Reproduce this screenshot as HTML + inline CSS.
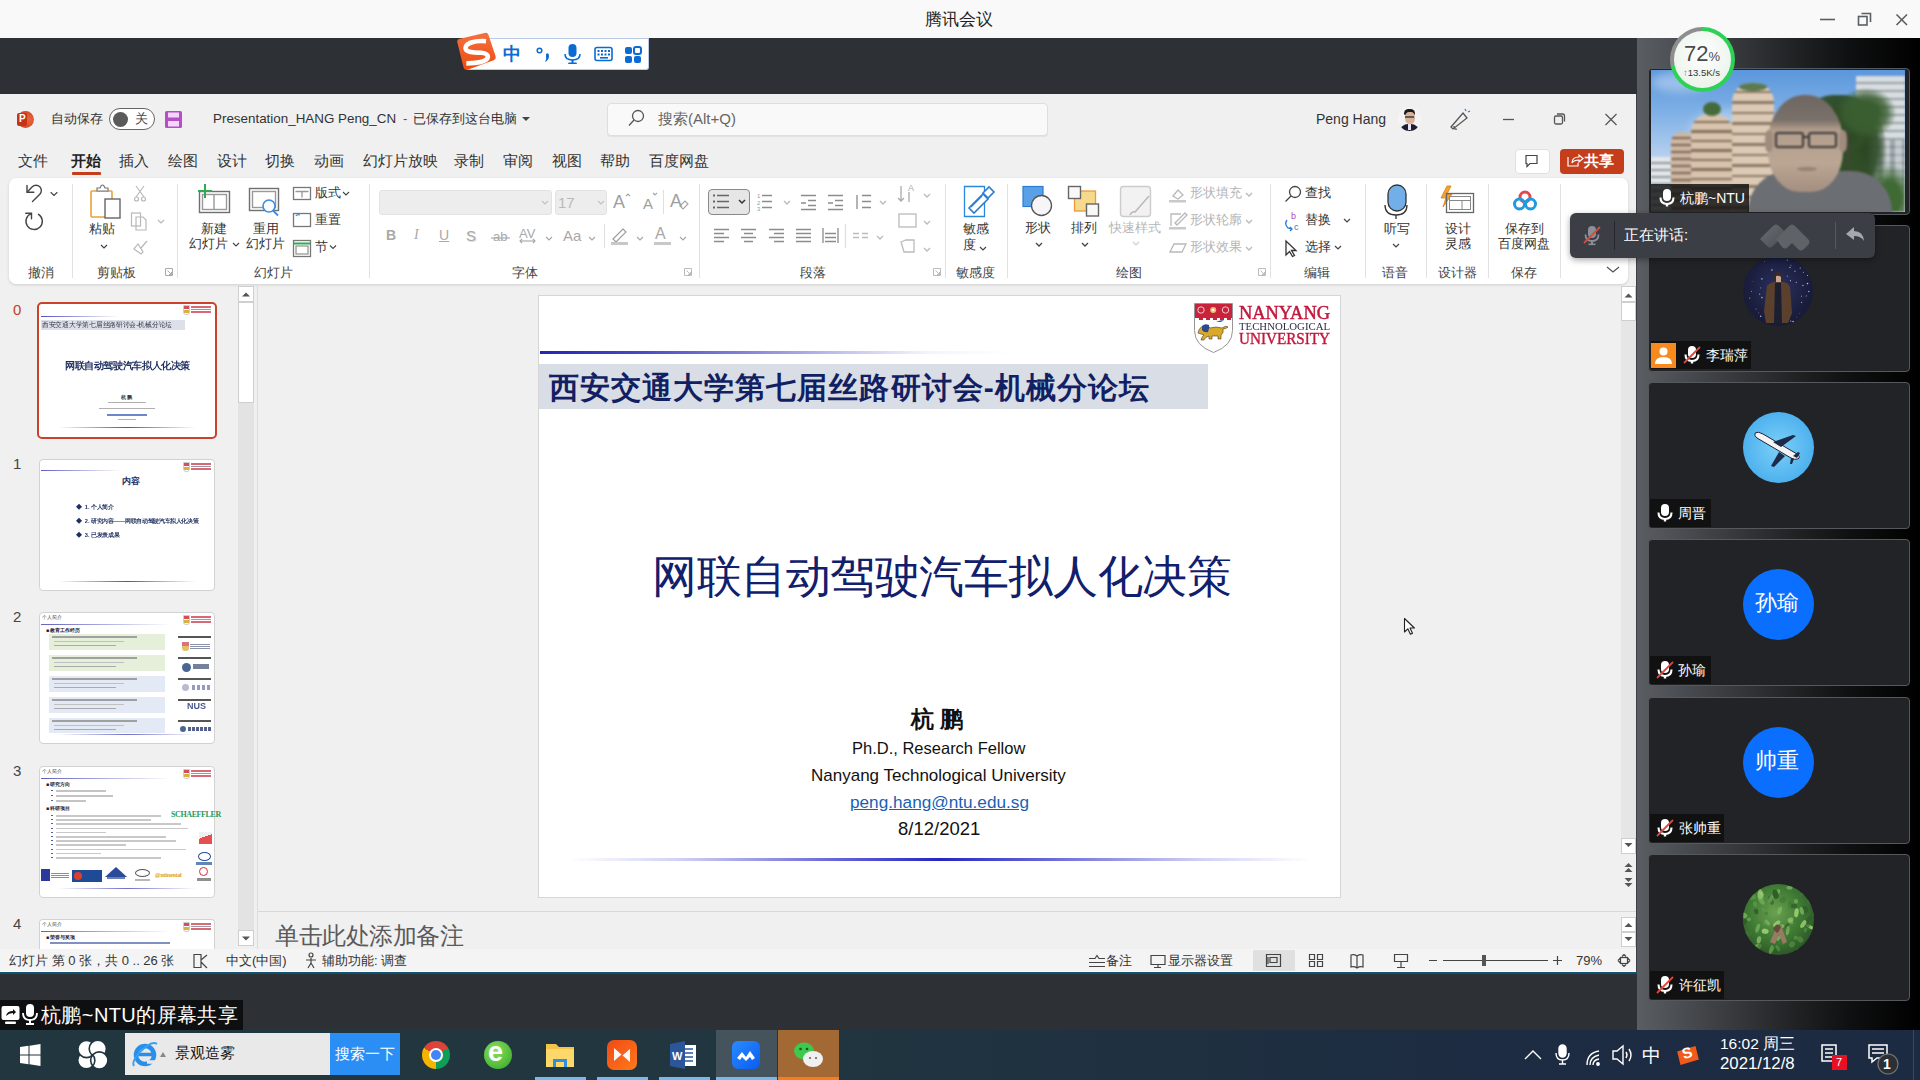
<!DOCTYPE html>
<html><head><meta charset="utf-8">
<style>
*{margin:0;padding:0;box-sizing:border-box}
html,body{width:1920px;height:1080px;overflow:hidden;background:#2c2f33;font-family:"Liberation Sans",sans-serif;color:#222;position:relative}
.a{position:absolute}
.t{position:absolute;white-space:nowrap;line-height:1}
svg{position:absolute;overflow:visible}
#titlebar{left:0;top:0;width:1920px;height:38px;background:#f9f9f9}
#darkband{left:0;top:38px;width:1637px;height:56px;background:#2d3034}
#rpanel{left:1637px;top:38px;width:283px;height:992px;background:linear-gradient(90deg,#5a5e63 0%,#45484c 20%,#343538 38%,#222325 55%,#0f1011 75%,#000 100%)}
#ppt{left:0;top:94px;width:1637px;height:879px;background:#f0f0f0}
#bottomband{left:0;top:973px;width:1637px;height:57px;background:#2d3034}
#taskbar{left:0;top:1030px;width:1920px;height:50px;background:linear-gradient(90deg,#22363f 0%,#213640 40%,#1d2c41 75%,#1c2b42 100%)}
.menu{font-size:15px;color:#333;top:153px}
.rb{font-size:13px;color:#333}
.gl{font-size:13px;color:#444;top:266px}
.sep{position:absolute;width:1px;background:#e1e1e1;top:184px;height:94px}
.dis{color:#b5b5b5}
</style></head><body>
<div id="titlebar" class="a"></div>
<div class="t" style="left:925px;top:11px;font-size:17px;color:#1e1e1e">腾讯会议</div>
<svg style="left:0;top:0" width="1920" height="38">
<g stroke="#5b5e63" stroke-width="1.6" fill="none">
<line x1="1820" y1="19.5" x2="1835" y2="19.5"/>
<rect x="1858.5" y="16.5" width="8.5" height="8.5"/>
<polyline points="1861.5,13.5 1870.5,13.5 1870.5,22"/>
<line x1="1896.5" y1="14.5" x2="1907" y2="25"/><line x1="1907" y1="14.5" x2="1896.5" y2="25"/>
</g></svg>

<div id="darkband" class="a"></div>
<!-- IME toolbar -->
<div class="a" style="left:466px;top:38px;width:183px;height:32px;background:#fff;border:1px solid #b9cbe6;border-left:none;border-radius:0 0 3px 0"></div>
<svg style="left:0;top:0" width="520" height="80"><defs><linearGradient id="sg" x1="0" y1="0" x2="0" y2="1"><stop offset="0" stop-color="#f47040"/><stop offset="1" stop-color="#ee4c0c"/></linearGradient></defs>
<path d="M459 39 Q456.5 40 457.5 43 L463.5 67.5 Q464.5 70.5 467.5 69.8 L493 60.5 Q496.5 59 495.5 56 L488.5 35 Q487.5 32 484.5 33z" fill="url(#sg)"/>
<path d="M486 41.2 C474 40.2, 465.5 43.5, 465.5 48 C465.5 52.3, 474 52.6, 481 52.8 C486.5 53, 489 55.5, 487.3 58.5 C485 62, 474 63.4, 466.3 63.4" fill="none" stroke="#fff" stroke-width="4.6"/>
</svg>
<div class="t" style="left:503px;top:45px;font-size:18px;color:#0b6bd3;font-weight:bold">中</div>
<svg style="left:0;top:0" width="700" height="90">
<g fill="#0b6bd3">
<circle cx="539.5" cy="50.5" r="2.3" fill="none" stroke="#0b6bd3" stroke-width="1.5"/>
<path d="M546 54 q3 -2 3 2 q0 4 -4 6 q2 -3 1 -5z"/>
<rect x="568.5" y="44" width="8" height="13" rx="4"/>
<path d="M565 54 q0 6 7.5 6 q7.5 0 7.5 -6" fill="none" stroke="#0b6bd3" stroke-width="1.6"/>
<rect x="571.5" y="60" width="2" height="3"/><rect x="568" y="62.5" width="9" height="1.5" rx="1"/>
<rect x="595" y="47.5" width="17" height="13" rx="2" fill="none" stroke="#0b6bd3" stroke-width="1.6"/>
<rect x="597.5" y="50" width="2" height="2"/><rect x="601" y="50" width="2" height="2"/><rect x="604.5" y="50" width="2" height="2"/><rect x="608" y="50" width="2" height="2"/>
<rect x="597.5" y="53.5" width="2" height="2"/><rect x="601" y="53.5" width="2" height="2"/><rect x="604.5" y="53.5" width="2" height="2"/><rect x="608" y="53.5" width="2" height="2"/>
<rect x="600" y="57" width="8" height="1.6"/>
<rect x="625" y="47" width="7" height="7" rx="2"/><rect x="634" y="47" width="7" height="7" rx="2" fill="none" stroke="#0b6bd3" stroke-width="2"/>
<rect x="625" y="56" width="7" height="7" rx="2"/><rect x="634" y="56" width="7" height="7" rx="2"/>
</g></svg>


<div id="rpanel" class="a"></div>
<div class="a" style="left:1648px;top:67.5px;width:262px;height:147px;border:1.5px solid #55585d;border-radius:4px;background:#222326"></div>
<div class="a" style="left:1648px;top:224.8px;width:262px;height:147px;border:1.5px solid #55585d;border-radius:4px;background:#222326"></div>
<div class="a" style="left:1648px;top:382.1px;width:262px;height:147px;border:1.5px solid #55585d;border-radius:4px;background:#222326"></div>
<div class="a" style="left:1648px;top:539.4px;width:262px;height:147px;border:1.5px solid #55585d;border-radius:4px;background:#222326"></div>
<div class="a" style="left:1648px;top:696.7px;width:262px;height:147px;border:1.5px solid #55585d;border-radius:4px;background:#222326"></div>
<div class="a" style="left:1648px;top:854.0px;width:262px;height:147px;border:1.5px solid #55585d;border-radius:4px;background:#222326"></div>

<div class="a" style="left:1651px;top:70px;width:254px;height:142px;overflow:hidden;background:linear-gradient(180deg,#5b97dc 0%,#7fb0e6 30%,#b4cfee 60%,#dde6ef 100%)"><div class="a" style="left:0;top:0;width:254px;height:142px;filter:blur(0.9px)">
 <div class="a" style="left:0;top:2px;width:60px;height:20px;border-radius:50%;background:rgba(255,255,255,.35);filter:blur(4px)"></div>
 <div class="a" style="left:40px;top:40px;width:90px;height:40px;border-radius:50%;background:rgba(255,255,255,.35);filter:blur(6px)"></div>
 <div class="a" style="left:0;top:87px;width:24px;height:55px;background:repeating-linear-gradient(180deg,#e4e7ea 0 5px,#8d969c 5px 7px)"></div>
 <div class="a" style="left:20px;top:62px;width:24px;height:80px;border-radius:10px 10px 4px 4px;background:repeating-linear-gradient(180deg,#cdb6a2 0 5px,#7c6755 5px 7px)"></div>
 <div class="a" style="left:40px;top:44px;width:42px;height:98px;border-radius:18px 18px 6px 6px;background:repeating-linear-gradient(180deg,#d8c3ae 0 7px,#85705c 7px 9.5px)"></div>
 <div class="a" style="left:52px;top:32px;width:18px;height:14px;border-radius:50%;background:#456b3c"></div>
 <div class="a" style="left:81px;top:13px;width:42px;height:129px;border-radius:19px 19px 6px 6px;background:repeating-linear-gradient(180deg,#ddcab6 0 8px,#8c7965 8px 10.5px)"></div>
 <div class="a" style="left:88px;top:13px;width:28px;height:8px;border-radius:50%;background:#5c7a4e"></div>
 <div class="a" style="left:205px;top:6px;width:49px;height:136px;background:repeating-linear-gradient(180deg,#d8dde0 0 6px,#98a1a7 6px 8px)"></div>
 <div class="a" style="left:215px;top:70px;width:39px;height:72px;background:repeating-linear-gradient(90deg,#6f7a80 0 5px,#b8c0c4 5px 12px);opacity:.55"></div>
 <div class="a" style="left:140px;top:25px;width:95px;height:117px;border-radius:45% 45% 10% 10%;background:radial-gradient(ellipse at 50% 45%,#2a4622 0 40%,rgba(45,75,38,.9) 58%,rgba(55,90,45,0) 75%)"></div>
 <div class="a" style="left:150px;top:30px;width:70px;height:60px;border-radius:50%;background:radial-gradient(ellipse at 50% 50%,#2c4a24 0 35%,rgba(50,80,40,.85) 55%,rgba(60,90,50,0) 72%)"></div>
 <div class="a" style="left:185px;top:18px;width:60px;height:50px;border-radius:50%;background:radial-gradient(ellipse at 50% 50%,#3a5e30 0 30%,rgba(60,95,50,.8) 50%,rgba(60,95,50,0) 72%)"></div>
 <div class="a" style="left:160px;top:70px;width:60px;height:72px;border-radius:40%;background:radial-gradient(ellipse at 50% 50%,#304e28 0 35%,rgba(48,78,40,.8) 55%,rgba(48,78,40,0) 75%)"></div>
 <div class="a" style="left:215px;top:95px;width:39px;height:47px;background:radial-gradient(ellipse at 60% 70%,#3f6a34 0 35%,rgba(63,106,52,0) 75%)"></div>
 <div class="a" style="left:196px;top:60px;width:3px;height:82px;background:#4a4238;opacity:.6"></div>
 <div class="a" style="left:97px;top:101px;width:144px;height:50px;border-radius:40px 40px 0 0;background:#6b6e72"></div>
 <div class="a" style="left:117px;top:25px;width:75px;height:97px;border-radius:48% 48% 42% 42%;background:linear-gradient(180deg,#6e6660 0%,#7a716b 26%,#b39d8c 36%,#bba593 70%,#a48f80 100%)"></div>
 <div class="a" style="left:114px;top:60px;width:8px;height:22px;border-radius:40%;background:#a08b7d"></div>
 <div class="a" style="left:188px;top:60px;width:8px;height:22px;border-radius:40%;background:#a08b7d"></div>
 <div class="a" style="left:124px;top:62px;width:29px;height:16px;border:2.5px solid #3a3838;border-radius:3px"></div>
 <div class="a" style="left:157px;top:62px;width:29px;height:16px;border:2.5px solid #3a3838;border-radius:3px"></div>
 <div class="a" style="left:152px;top:66px;width:6px;height:2px;background:#3a3838"></div>
 <div class="a" style="left:146px;top:97px;width:20px;height:4px;border-radius:50%;background:#9a8072"></div>
</div></div>
<div class="a" style="left:1651px;top:184px;width:98px;height:28px;background:rgba(15,15,15,.82)"></div>
<svg style="left:1656px;top:187px" width="22" height="22" viewBox="0 0 22 22"><rect x="7" y="2" width="8" height="12" rx="4" fill="#fff"/><path d="M4.5 10.5 q0 6.5 6.5 6.5 q6.5 0 6.5 -6.5" fill="none" stroke="#fff" stroke-width="2.1"/><rect x="9.8" y="16.5" width="2.4" height="3" fill="#fff"/></svg><div class="t" style="left:1680px;top:191px;font-size:14px;color:#fff">杭鹏~NTU</div>

<div class="a" style="left:1670px;top:27px;width:65px;height:65px;border-radius:50%;background:conic-gradient(#2ed158 0 72%,#8e8e8e 72% 100%)"></div>
<div class="a" style="left:1674px;top:31px;width:57px;height:57px;border-radius:50%;background:radial-gradient(circle at 50% 40%,#ffffff,#e4efe4)"></div>
<div class="t" style="left:1684px;top:43px;font-size:22px;color:#4a4a4a">72<span style="font-size:13px">%</span></div>
<div class="t" style="left:1683px;top:68px;font-size:9.5px;color:#333"><span style="color:#2b8ef4">↑</span>13.5K/s</div>

<div class="a" style="left:1743px;top:256px;width:70px;height:70px;border-radius:50%;overflow:hidden;background:radial-gradient(circle at 50% 45%,#2b3160,#1a1d3c 60%,#121430)">
<svg style="left:0;top:0" width="70" height="70"><circle cx="16.7" cy="38.1" r="0.6" fill="#cfd6ff" opacity="0.86"/><circle cx="33.2" cy="40.7" r="0.4" fill="#cfd6ff" opacity="0.85"/><circle cx="32.8" cy="38.6" r="0.5" fill="#cfd6ff" opacity="0.90"/><circle cx="32.9" cy="58.6" r="0.8" fill="#cfd6ff" opacity="0.60"/><circle cx="60.3" cy="16.2" r="0.5" fill="#cfd6ff" opacity="0.83"/><circle cx="36.6" cy="51.9" r="0.4" fill="#cfd6ff" opacity="0.48"/><circle cx="67.0" cy="3.0" r="0.4" fill="#cfd6ff" opacity="0.81"/><circle cx="18.9" cy="41.6" r="0.8" fill="#cfd6ff" opacity="0.76"/><circle cx="64.5" cy="27.6" r="0.8" fill="#cfd6ff" opacity="0.88"/><circle cx="9.4" cy="25.6" r="0.4" fill="#cfd6ff" opacity="0.47"/><circle cx="15.2" cy="67.6" r="0.8" fill="#cfd6ff" opacity="0.79"/><circle cx="59.9" cy="29.5" r="0.8" fill="#cfd6ff" opacity="0.69"/><circle cx="37.4" cy="28.5" r="0.5" fill="#cfd6ff" opacity="0.85"/><circle cx="47.7" cy="65.0" r="0.6" fill="#cfd6ff" opacity="0.90"/><circle cx="47.0" cy="11.4" r="0.6" fill="#cfd6ff" opacity="0.88"/><circle cx="63.3" cy="39.8" r="0.5" fill="#cfd6ff" opacity="0.72"/><circle cx="69.2" cy="18.7" r="0.4" fill="#cfd6ff" opacity="0.43"/><circle cx="59.8" cy="69.3" r="0.4" fill="#cfd6ff" opacity="0.57"/><circle cx="4.7" cy="62.8" r="0.4" fill="#cfd6ff" opacity="0.55"/><circle cx="53.8" cy="61.1" r="0.4" fill="#cfd6ff" opacity="0.70"/><circle cx="53.3" cy="26.4" r="0.6" fill="#cfd6ff" opacity="0.68"/><circle cx="64.5" cy="19.5" r="0.5" fill="#cfd6ff" opacity="0.90"/><circle cx="21.7" cy="5.4" r="0.4" fill="#cfd6ff" opacity="0.87"/><circle cx="68.0" cy="20.4" r="0.6" fill="#cfd6ff" opacity="0.48"/><circle cx="3.0" cy="60.7" r="0.6" fill="#cfd6ff" opacity="0.58"/><circle cx="9.7" cy="60.3" r="0.8" fill="#cfd6ff" opacity="0.63"/><circle cx="36.4" cy="45.1" r="0.4" fill="#cfd6ff" opacity="0.71"/><circle cx="65.8" cy="35.5" r="0.8" fill="#cfd6ff" opacity="0.72"/><circle cx="50.1" cy="65.6" r="0.8" fill="#cfd6ff" opacity="0.89"/><circle cx="36.5" cy="38.4" r="0.4" fill="#cfd6ff" opacity="0.79"/><circle cx="69.1" cy="22.0" r="0.8" fill="#cfd6ff" opacity="0.71"/><circle cx="44.3" cy="4.2" r="0.6" fill="#cfd6ff" opacity="0.63"/><circle cx="47.5" cy="24.7" r="0.6" fill="#cfd6ff" opacity="0.77"/><circle cx="1.6" cy="4.2" r="0.4" fill="#cfd6ff" opacity="0.88"/><circle cx="17.6" cy="31.9" r="0.6" fill="#cfd6ff" opacity="0.49"/><circle cx="13.0" cy="53.1" r="0.6" fill="#cfd6ff" opacity="0.55"/><circle cx="26.4" cy="54.1" r="0.4" fill="#cfd6ff" opacity="0.89"/><circle cx="47.9" cy="9.2" r="0.5" fill="#cfd6ff" opacity="0.73"/><circle cx="18.9" cy="22.9" r="0.8" fill="#cfd6ff" opacity="0.72"/><circle cx="6.8" cy="42.1" r="0.6" fill="#cfd6ff" opacity="0.74"/><circle cx="15.7" cy="56.7" r="0.5" fill="#cfd6ff" opacity="0.44"/><circle cx="51.9" cy="15.3" r="0.8" fill="#cfd6ff" opacity="0.54"/><circle cx="55.1" cy="2.4" r="0.5" fill="#cfd6ff" opacity="0.56"/><circle cx="58.5" cy="40.2" r="0.6" fill="#cfd6ff" opacity="0.57"/><circle cx="58.0" cy="6.0" r="0.6" fill="#cfd6ff" opacity="0.69"/><circle cx="29.5" cy="36.3" r="0.6" fill="#cfd6ff" opacity="0.63"/><circle cx="44.4" cy="20.3" r="0.8" fill="#cfd6ff" opacity="0.42"/><circle cx="28.9" cy="14.0" r="0.8" fill="#cfd6ff" opacity="0.87"/><circle cx="61.6" cy="69.1" r="0.8" fill="#cfd6ff" opacity="0.68"/><circle cx="69.0" cy="50.2" r="0.4" fill="#cfd6ff" opacity="0.77"/><circle cx="58.6" cy="46.4" r="0.6" fill="#cfd6ff" opacity="0.67"/><circle cx="62.3" cy="60.3" r="0.6" fill="#cfd6ff" opacity="0.46"/><circle cx="17.1" cy="2.5" r="0.5" fill="#cfd6ff" opacity="0.85"/><circle cx="63.0" cy="40.4" r="0.4" fill="#cfd6ff" opacity="0.64"/><circle cx="8.5" cy="35.2" r="0.5" fill="#cfd6ff" opacity="0.73"/><circle cx="36.7" cy="29.0" r="0.4" fill="#cfd6ff" opacity="0.57"/><circle cx="17.7" cy="60.3" r="0.8" fill="#cfd6ff" opacity="0.81"/><circle cx="4.3" cy="15.5" r="0.4" fill="#cfd6ff" opacity="0.67"/><circle cx="57.2" cy="12.0" r="0.6" fill="#cfd6ff" opacity="0.86"/><circle cx="56.4" cy="57.6" r="0.4" fill="#cfd6ff" opacity="0.64"/>
<path d="M31 18 q4 -4 8 0 q1 5 -1 8 l-6 0 q-2 -4 -1 -8z" fill="#3a2a24"/>
<path d="M33 20 q3 -1 5 1 v5 h-5z" fill="#c9a48e"/>
<path d="M24 30 q3 -4 9 -4 h6 q6 0 8 5 l2 26 l-4 10 h-22 l-2 -12z" fill="#5c402e"/>
<path d="M32 27 h6 l1 40 h-8z" fill="#1c1f30"/>
</svg></div>
<div class="a" style="left:1651px;top:341px;width:100px;height:28px;background:#111"></div>
<div class="a" style="left:1651px;top:343px;width:25px;height:25px;background:#f78a1f"></div>
<svg style="left:1651px;top:343px" width="25" height="25"><circle cx="12.5" cy="8.5" r="4" fill="#fff"/><path d="M4 21 q0 -7 8.5 -7 q8.5 0 8.5 7z" fill="#fff"/></svg>
<svg style="left:1681px;top:344px" width="22" height="22" viewBox="0 0 22 22"><rect x="7" y="2" width="8" height="12" rx="4" fill="#fff"/><path d="M4.5 10.5 q0 6.5 6.5 6.5 q6.5 0 6.5 -6.5" fill="none" stroke="#fff" stroke-width="2.1"/><rect x="9.8" y="16.5" width="2.4" height="3" fill="#fff"/><line x1="3" y1="19" x2="19" y2="3" stroke="#e0463a" stroke-width="1.8"/></svg><div class="t" style="left:1706px;top:348px;font-size:14px;color:#fff">李瑞萍</div>

<div class="a" style="left:1743px;top:412px;width:71px;height:71px;border-radius:50%;background:radial-gradient(circle at 50% 50%,#7cd0f8,#3ba5ea)"></div>
<svg style="left:1743px;top:412px" width="71" height="71"><g fill="#1d2a4a">
<path d="M12 21 q3 -2 8 1 l34 20 q4 3 1 5 q-3 1 -7 -1 l-34 -20 q-3 -2 -2 -5z" fill="#f4f4f4" stroke="#223" stroke-width="1"/>
<path d="M30 30 l20 -7 l3 1 l-15 11z"/><path d="M36 40 l-8 14 l3 1 l11 -11z"/>
<path d="M50 44 l5 -4 l2 1 l-3 5z"/><path d="M48 46 l-1 6 l2 0 l2 -5z"/>
</g></svg>
<div class="a" style="left:1650px;top:499px;width:61px;height:28px;background:#111"></div>
<svg style="left:1654px;top:502px" width="22" height="22" viewBox="0 0 22 22"><rect x="7" y="2" width="8" height="12" rx="4" fill="#fff"/><path d="M4.5 10.5 q0 6.5 6.5 6.5 q6.5 0 6.5 -6.5" fill="none" stroke="#fff" stroke-width="2.1"/><rect x="9.8" y="16.5" width="2.4" height="3" fill="#fff"/></svg><div class="t" style="left:1678px;top:506px;font-size:14px;color:#fff">周晋</div>

<div class="a" style="left:1743px;top:569px;width:71px;height:71px;border-radius:50%;background:#0a6fff"></div>
<div class="t" style="left:1755px;top:592px;font-size:22px;color:#fff">孙瑜</div>
<div class="a" style="left:1650px;top:656px;width:61px;height:28px;background:#111"></div>
<svg style="left:1654px;top:659px" width="22" height="22" viewBox="0 0 22 22"><rect x="7" y="2" width="8" height="12" rx="4" fill="#fff"/><path d="M4.5 10.5 q0 6.5 6.5 6.5 q6.5 0 6.5 -6.5" fill="none" stroke="#fff" stroke-width="2.1"/><rect x="9.8" y="16.5" width="2.4" height="3" fill="#fff"/><line x1="3" y1="19" x2="19" y2="3" stroke="#e0463a" stroke-width="1.8"/></svg><div class="t" style="left:1678px;top:663px;font-size:14px;color:#fff">孙瑜</div>

<div class="a" style="left:1743px;top:727px;width:71px;height:71px;border-radius:50%;background:#0a6fff"></div>
<div class="t" style="left:1755px;top:750px;font-size:22px;color:#fff">帅重</div>
<div class="a" style="left:1650px;top:814px;width:74px;height:28px;background:#111"></div>
<svg style="left:1654px;top:817px" width="22" height="22" viewBox="0 0 22 22"><rect x="7" y="2" width="8" height="12" rx="4" fill="#fff"/><path d="M4.5 10.5 q0 6.5 6.5 6.5 q6.5 0 6.5 -6.5" fill="none" stroke="#fff" stroke-width="2.1"/><rect x="9.8" y="16.5" width="2.4" height="3" fill="#fff"/><line x1="3" y1="19" x2="19" y2="3" stroke="#e0463a" stroke-width="1.8"/></svg><div class="t" style="left:1679px;top:821px;font-size:14px;color:#fff">张帅重</div>

<div class="a" style="left:1743px;top:884px;width:71px;height:71px;border-radius:50%;overflow:hidden;background:radial-gradient(circle at 45% 40%,#6aa050 0%,#3f7a34 45%,#2a5228 80%,#1d3a1e 100%)">
<svg style="left:0;top:0" width="71" height="71"><ellipse cx="40.5" cy="24.0" rx="4.3" ry="1.9" fill="#2e5a28" opacity="0.74" transform="rotate(108 35 35)"/><ellipse cx="3.6" cy="19.4" rx="4.5" ry="2.8" fill="#5e9a48" opacity="0.52" transform="rotate(12 35 35)"/><ellipse cx="4.9" cy="58.5" rx="4.6" ry="1.6" fill="#2e5a28" opacity="0.72" transform="rotate(40 35 35)"/><ellipse cx="22.3" cy="21.1" rx="3.9" ry="2.4" fill="#3f7a34" opacity="0.62" transform="rotate(84 35 35)"/><ellipse cx="30.4" cy="7.7" rx="2.0" ry="2.6" fill="#7fb862" opacity="0.76" transform="rotate(10 35 35)"/><ellipse cx="26.5" cy="36.3" rx="4.3" ry="2.1" fill="#7fb862" opacity="0.78" transform="rotate(110 35 35)"/><ellipse cx="3.8" cy="37.6" rx="4.3" ry="2.0" fill="#9acc70" opacity="0.71" transform="rotate(62 35 35)"/><ellipse cx="15.5" cy="16.2" rx="3.8" ry="2.7" fill="#5e9a48" opacity="0.69" transform="rotate(7 35 35)"/><ellipse cx="66.5" cy="22.5" rx="4.7" ry="2.7" fill="#3f7a34" opacity="0.55" transform="rotate(176 35 35)"/><ellipse cx="8.7" cy="48.8" rx="4.0" ry="2.8" fill="#9acc70" opacity="0.80" transform="rotate(81 35 35)"/><ellipse cx="40.0" cy="6.2" rx="3.8" ry="1.5" fill="#5e9a48" opacity="0.61" transform="rotate(99 35 35)"/><ellipse cx="3.1" cy="5.5" rx="2.3" ry="2.8" fill="#5e9a48" opacity="0.87" transform="rotate(87 35 35)"/><ellipse cx="59.7" cy="7.3" rx="4.5" ry="2.5" fill="#3f7a34" opacity="0.76" transform="rotate(22 35 35)"/><ellipse cx="2.6" cy="46.0" rx="3.5" ry="2.6" fill="#7fb862" opacity="0.75" transform="rotate(25 35 35)"/><ellipse cx="66.4" cy="3.7" rx="3.0" ry="2.3" fill="#7fb862" opacity="0.61" transform="rotate(46 35 35)"/><ellipse cx="45.9" cy="27.2" rx="4.1" ry="2.9" fill="#3f7a34" opacity="0.67" transform="rotate(101 35 35)"/><ellipse cx="66.7" cy="33.4" rx="4.9" ry="2.1" fill="#5e9a48" opacity="0.94" transform="rotate(105 35 35)"/><ellipse cx="59.9" cy="58.0" rx="3.2" ry="2.4" fill="#2e5a28" opacity="0.80" transform="rotate(132 35 35)"/><ellipse cx="48.7" cy="9.4" rx="3.2" ry="2.8" fill="#5e9a48" opacity="0.54" transform="rotate(123 35 35)"/><ellipse cx="65.1" cy="31.0" rx="3.3" ry="2.6" fill="#5e9a48" opacity="0.56" transform="rotate(50 35 35)"/><ellipse cx="10.4" cy="30.9" rx="4.8" ry="2.8" fill="#2e5a28" opacity="0.93" transform="rotate(75 35 35)"/><ellipse cx="47.7" cy="51.3" rx="3.8" ry="2.4" fill="#3f7a34" opacity="0.90" transform="rotate(78 35 35)"/><ellipse cx="1.6" cy="28.8" rx="3.1" ry="1.8" fill="#3f7a34" opacity="0.61" transform="rotate(123 35 35)"/><ellipse cx="55.0" cy="8.6" rx="5.0" ry="2.2" fill="#2e5a28" opacity="0.59" transform="rotate(148 35 35)"/><ellipse cx="59.3" cy="49.3" rx="3.7" ry="2.2" fill="#7fb862" opacity="0.89" transform="rotate(102 35 35)"/><ellipse cx="55.6" cy="52.9" rx="2.1" ry="2.9" fill="#5e9a48" opacity="0.79" transform="rotate(172 35 35)"/><ellipse cx="4.9" cy="13.0" rx="2.8" ry="2.8" fill="#3f7a34" opacity="0.56" transform="rotate(159 35 35)"/><ellipse cx="50.0" cy="51.5" rx="4.7" ry="1.9" fill="#7fb862" opacity="0.64" transform="rotate(108 35 35)"/><ellipse cx="6.5" cy="47.9" rx="2.4" ry="1.9" fill="#3f7a34" opacity="0.52" transform="rotate(115 35 35)"/><ellipse cx="41.2" cy="40.5" rx="2.0" ry="2.0" fill="#9acc70" opacity="0.67" transform="rotate(19 35 35)"/><ellipse cx="14.9" cy="35.1" rx="4.9" ry="2.1" fill="#2e5a28" opacity="0.64" transform="rotate(70 35 35)"/><ellipse cx="5.4" cy="26.0" rx="3.3" ry="2.3" fill="#3f7a34" opacity="0.54" transform="rotate(179 35 35)"/><ellipse cx="26.6" cy="46.3" rx="4.3" ry="1.9" fill="#3f7a34" opacity="0.55" transform="rotate(86 35 35)"/><ellipse cx="47.8" cy="32.2" rx="2.3" ry="2.2" fill="#3f7a34" opacity="0.53" transform="rotate(75 35 35)"/><ellipse cx="48.2" cy="34.0" rx="2.5" ry="2.5" fill="#5e9a48" opacity="0.58" transform="rotate(167 35 35)"/><ellipse cx="32.3" cy="6.5" rx="3.7" ry="2.9" fill="#2e5a28" opacity="0.69" transform="rotate(76 35 35)"/><ellipse cx="46.0" cy="27.5" rx="2.9" ry="1.8" fill="#7fb862" opacity="0.55" transform="rotate(46 35 35)"/><ellipse cx="53.6" cy="32.6" rx="4.2" ry="2.0" fill="#3f7a34" opacity="0.62" transform="rotate(13 35 35)"/><ellipse cx="62.0" cy="2.5" rx="3.5" ry="1.9" fill="#2e5a28" opacity="0.66" transform="rotate(85 35 35)"/><ellipse cx="67.1" cy="26.9" rx="4.4" ry="1.6" fill="#9acc70" opacity="0.88" transform="rotate(28 35 35)"/><ellipse cx="10.8" cy="35.4" rx="4.0" ry="2.3" fill="#7fb862" opacity="0.58" transform="rotate(48 35 35)"/><ellipse cx="40.3" cy="40.2" rx="3.2" ry="3.0" fill="#5e9a48" opacity="0.77" transform="rotate(37 35 35)"/><ellipse cx="61.0" cy="47.9" rx="3.6" ry="1.8" fill="#5e9a48" opacity="0.59" transform="rotate(64 35 35)"/><ellipse cx="26.2" cy="17.6" rx="4.5" ry="2.2" fill="#9acc70" opacity="0.93" transform="rotate(98 35 35)"/><ellipse cx="22.4" cy="54.4" rx="2.9" ry="2.2" fill="#2e5a28" opacity="0.81" transform="rotate(76 35 35)"/><ellipse cx="63.6" cy="40.1" rx="2.1" ry="1.8" fill="#7fb862" opacity="0.55" transform="rotate(169 35 35)"/><ellipse cx="16.6" cy="10.4" rx="3.9" ry="1.8" fill="#2e5a28" opacity="0.60" transform="rotate(128 35 35)"/><ellipse cx="65.7" cy="56.8" rx="2.3" ry="1.9" fill="#5e9a48" opacity="0.56" transform="rotate(22 35 35)"/><ellipse cx="44.3" cy="3.0" rx="3.1" ry="1.9" fill="#7fb862" opacity="0.72" transform="rotate(4 35 35)"/><ellipse cx="66.0" cy="19.4" rx="4.6" ry="2.5" fill="#5e9a48" opacity="0.54" transform="rotate(153 35 35)"/><ellipse cx="55.0" cy="2.0" rx="2.2" ry="3.0" fill="#5e9a48" opacity="0.92" transform="rotate(51 35 35)"/><ellipse cx="31.0" cy="45.4" rx="3.5" ry="1.7" fill="#7fb862" opacity="0.68" transform="rotate(51 35 35)"/><ellipse cx="50.1" cy="23.5" rx="3.4" ry="1.6" fill="#9acc70" opacity="0.59" transform="rotate(125 35 35)"/><ellipse cx="21.6" cy="27.9" rx="4.3" ry="2.1" fill="#5e9a48" opacity="0.70" transform="rotate(9 35 35)"/><ellipse cx="51.1" cy="22.0" rx="3.1" ry="2.3" fill="#2e5a28" opacity="0.68" transform="rotate(0 35 35)"/><ellipse cx="57.1" cy="15.5" rx="3.1" ry="2.8" fill="#2e5a28" opacity="0.59" transform="rotate(53 35 35)"/><ellipse cx="1.6" cy="35.1" rx="3.5" ry="2.5" fill="#5e9a48" opacity="0.55" transform="rotate(43 35 35)"/><ellipse cx="31.4" cy="11.1" rx="4.5" ry="2.1" fill="#3f7a34" opacity="0.68" transform="rotate(180 35 35)"/><ellipse cx="50.7" cy="14.4" rx="2.1" ry="2.2" fill="#5e9a48" opacity="0.61" transform="rotate(99 35 35)"/><ellipse cx="33.7" cy="9.9" rx="3.9" ry="2.0" fill="#7fb862" opacity="0.77" transform="rotate(74 35 35)"/><ellipse cx="19.5" cy="47.3" rx="3.4" ry="2.9" fill="#3f7a34" opacity="0.72" transform="rotate(143 35 35)"/><ellipse cx="18.9" cy="48.9" rx="3.9" ry="2.0" fill="#7fb862" opacity="0.53" transform="rotate(111 35 35)"/><ellipse cx="68.8" cy="35.5" rx="2.0" ry="1.5" fill="#7fb862" opacity="0.51" transform="rotate(128 35 35)"/><ellipse cx="2.6" cy="3.2" rx="4.0" ry="2.9" fill="#5e9a48" opacity="0.90" transform="rotate(122 35 35)"/><ellipse cx="24.1" cy="28.7" rx="3.1" ry="2.5" fill="#9acc70" opacity="0.64" transform="rotate(155 35 35)"/><ellipse cx="44.8" cy="23.7" rx="4.8" ry="1.8" fill="#9acc70" opacity="0.55" transform="rotate(99 35 35)"/><ellipse cx="38.9" cy="32.2" rx="4.3" ry="2.1" fill="#9acc70" opacity="0.88" transform="rotate(141 35 35)"/><ellipse cx="25.5" cy="11.0" rx="4.4" ry="2.2" fill="#9acc70" opacity="0.85" transform="rotate(123 35 35)"/><ellipse cx="24.5" cy="49.3" rx="3.5" ry="2.6" fill="#9acc70" opacity="0.93" transform="rotate(10 35 35)"/><ellipse cx="10.9" cy="42.6" rx="2.1" ry="2.2" fill="#7fb862" opacity="0.64" transform="rotate(153 35 35)"/>
<path d="M27 58 l6 -14 q3 -4 6 0 l5 14 l-4 2 l-4 -10 l-4 10z" fill="#9a7a62"/>
<path d="M30 45 q4 -8 8 -2 q-2 5 -4 6z" fill="#6a4a3a"/>
</svg></div>
<div class="a" style="left:1650px;top:971px;width:74px;height:28px;background:#111"></div>
<svg style="left:1654px;top:974px" width="22" height="22" viewBox="0 0 22 22"><rect x="7" y="2" width="8" height="12" rx="4" fill="#fff"/><path d="M4.5 10.5 q0 6.5 6.5 6.5 q6.5 0 6.5 -6.5" fill="none" stroke="#fff" stroke-width="2.1"/><rect x="9.8" y="16.5" width="2.4" height="3" fill="#fff"/><line x1="3" y1="19" x2="19" y2="3" stroke="#e0463a" stroke-width="1.8"/></svg><div class="t" style="left:1679px;top:978px;font-size:14px;color:#fff">许征凯</div>

<div id="ppt" class="a"></div>
<!-- PPT title row -->
<div class="a" style="left:17px;top:111px;width:17px;height:17px;border-radius:50%;background:radial-gradient(circle at 70% 50%,#e8673f,#c8361a)"></div>
<div class="a" style="left:17px;top:113px;width:10px;height:13px;background:#c43318;border-radius:2px"></div>
<div class="t" style="left:19px;top:114px;font-size:10px;font-weight:bold;color:#fff">P</div>
<div class="t" style="left:51px;top:112px;font-size:13px;color:#333">自动保存</div>
<div class="a" style="left:109px;top:108px;width:46px;height:22px;border:1px solid #666;border-radius:11px;background:#fff"></div>
<div class="a" style="left:113px;top:112px;width:15px;height:15px;border-radius:50%;background:#5b5b5b"></div>
<div class="t" style="left:135px;top:112px;font-size:13px;color:#444">关</div>
<svg style="left:0;top:0" width="200" height="140"><g>
<rect x="165" y="111" width="17" height="17" rx="1.5" fill="#b44fc8"/>
<rect x="168" y="112.5" width="11" height="5" fill="#f4d6fa"/>
<rect x="168" y="121" width="11" height="5.5" fill="#f4d6fa"/>
</g></svg>
<div class="t" style="left:213px;top:112px;font-size:13.4px;color:#333">Presentation_HANG Peng_CN</div><div class="t" style="left:403px;top:112px;font-size:13px;color:#555">-</div><div class="t" style="left:413px;top:112px;font-size:13px;color:#333">已保存到这台电脑</div>
<svg style="left:0;top:0" width="600" height="140"><path d="M522 117 h8 l-4 4z" fill="#444"/></svg>
<div class="a" style="left:607px;top:103px;width:441px;height:33px;background:#f9f9f9;border:1px solid #dedede;border-radius:4px;box-shadow:0 1px 1px rgba(0,0,0,.06)"></div>
<svg style="left:0;top:0" width="700" height="140"><g fill="none" stroke="#555" stroke-width="1.3"><circle cx="638" cy="116" r="5.5"/><line x1="634" y1="120" x2="629" y2="125.5"/></g></svg>
<div class="t" style="left:658px;top:111px;font-size:15px;color:#666">搜索(Alt+Q)</div>
<div class="t" style="left:1316px;top:112px;font-size:14px;color:#333">Peng Hang</div>
<div class="a" style="left:1398px;top:107px;width:23px;height:24px;border-radius:50%;background:#f4f4f4;overflow:hidden">
<div class="a" style="left:6px;top:2px;width:11px;height:6px;border-radius:6px 6px 2px 2px;background:#1a1a1a"></div>
<div class="a" style="left:6.5px;top:5px;width:10px;height:12px;border-radius:40% 40% 45% 45%;background:#d8b39a"></div>
<div class="a" style="left:7px;top:9px;width:9px;height:2px;background:#333;opacity:.7"></div>
<div class="a" style="left:2px;top:17px;width:19px;height:9px;border-radius:8px 8px 0 0;background:#1c2030"></div>
<div class="a" style="left:10px;top:17px;width:3px;height:6px;background:#e8e8f0"></div>
</div>
<svg style="left:0;top:0" width="1640" height="140"><g fill="none" stroke="#555" stroke-width="1.3">
<path d="M1451 127 l12 -14 l4 5 l-14 11z"/><path d="M1454 126 q0 4 3 3"/>
<line x1="1465" y1="109" x2="1466" y2="111" stroke="#2b7cd3"/><line x1="1468" y1="112" x2="1470" y2="111" stroke="#2b7cd3"/>
<line x1="1503" y1="119.5" x2="1514" y2="119.5"/>
<rect x="1554.5" y="116" width="8" height="8" rx="1.5"/><path d="M1557 114 h5.5 q2 0 2 2 v5.5"/>
<line x1="1605.5" y1="114" x2="1616.5" y2="125"/><line x1="1616.5" y1="114" x2="1605.5" y2="125"/>
</g></svg>
<div class="a" style="left:1636px;top:94px;width:1px;height:879px;background:#3b3e42"></div>
<!-- menu row -->
<div class="t menu" style="left:18px">文件</div>
<div class="t menu" style="left:71px;font-weight:bold;color:#222">开始</div>
<div class="a" style="left:72px;top:172px;width:29px;height:3px;background:#c43e1c;border-radius:1px"></div>
<div class="t menu" style="left:119px">插入</div>
<div class="t menu" style="left:168px">绘图</div>
<div class="t menu" style="left:217px">设计</div>
<div class="t menu" style="left:265px">切换</div>
<div class="t menu" style="left:314px">动画</div>
<div class="t menu" style="left:363px">幻灯片放映</div>
<div class="t menu" style="left:454px">录制</div>
<div class="t menu" style="left:503px">审阅</div>
<div class="t menu" style="left:552px">视图</div>
<div class="t menu" style="left:600px">帮助</div>
<div class="t menu" style="left:649px">百度网盘</div>
<div class="a" style="left:1515px;top:149px;width:35px;height:25px;background:#fff;border:1px solid #e0e0e0;border-radius:4px"></div>
<svg style="left:0;top:0" width="1640" height="180"><path d="M1526 155.5 h11 v8 h-7 l-3 3 v-3 h-1z" fill="none" stroke="#444" stroke-width="1.2"/></svg>
<div class="a" style="left:1560px;top:149px;width:64px;height:25px;background:#c43e1c;border-radius:4px"></div>
<svg style="left:0;top:0" width="1640" height="180"><path d="M1568 157 v9 h10 v-3 M1572 163 q0 -6 7 -6 v-2 l4 3.5 l-4 3.5 v-2 q-5 0 -7 3" fill="none" stroke="#fff" stroke-width="1.2"/></svg>
<div class="t" style="left:1584px;top:153px;font-size:15px;font-weight:bold;color:#fff">共享</div>
<!-- ribbon -->
<div class="a" style="left:9px;top:178px;width:1619px;height:106px;background:#fff;border-radius:7px;box-shadow:0 1px 3px rgba(0,0,0,.14)"></div>
<div class="sep" style="left:72px"></div>
<div class="sep" style="left:177px"></div>
<div class="sep" style="left:369px"></div>
<div class="sep" style="left:699px"></div>
<div class="sep" style="left:945px"></div>
<div class="sep" style="left:1007px"></div>
<div class="sep" style="left:1270px"></div>
<div class="sep" style="left:1365px"></div>
<div class="sep" style="left:1426px"></div>
<div class="sep" style="left:1488px"></div>
<div class="sep" style="left:1560px"></div>
<!-- group labels -->
<div class="t gl" style="left:28px">撤消</div>
<div class="t gl" style="left:97px">剪贴板</div>
<div class="t gl" style="left:254px">幻灯片</div>
<div class="t gl" style="left:512px">字体</div>
<div class="t gl" style="left:800px">段落</div>
<div class="t gl" style="left:956px">敏感度</div>
<div class="t gl" style="left:1116px">绘图</div>
<div class="t gl" style="left:1304px">编辑</div>
<div class="t gl" style="left:1382px">语音</div>
<div class="t gl" style="left:1438px">设计器</div>
<div class="t gl" style="left:1511px">保存</div>
<svg style="left:0;top:0" width="1640" height="290"><g fill="none" stroke="#999" stroke-width="1">
<path d="M165.5 268.5 h7 v7 h-7z M167.5 270.5 l4 4 M171.5 272 v2.5 h-2.5" stroke="#aaa"/>
<path d="M684.5 268.5 h7 v7 h-7z M686.5 270.5 l4 4 M690.5 272 v2.5 h-2.5" stroke="#bbb"/>
<path d="M933.5 268.5 h7 v7 h-7z M935.5 270.5 l4 4 M939.5 272 v2.5 h-2.5" stroke="#bbb"/>
<path d="M1258.5 268.5 h7 v7 h-7z M1260.5 270.5 l4 4 M1264.5 272 v2.5 h-2.5" stroke="#bbb"/>
<path d="M1607 267 l6 5 l6 -5" stroke="#555" stroke-width="1.3"/>
</g></svg>
<!-- undo group -->
<svg style="left:0;top:0" width="1640" height="290"><g fill="none" stroke="#444" stroke-width="1.4" stroke-linecap="round">
<path d="M27 185.5 V192.2 H33.8"/><path d="M27.5 191.7 L32.3 186.8 A5.3 5.3 0 0 1 39.8 194.3 L32.5 201.5"/>
<path d="M51 192.5 l3 3 l3 -3" stroke-width="1.1"/>
<path d="M25.8 213.2 H31.5 V218.8"/><path d="M38.5 214.3 A8.2 8.2 0 1 1 31.2 213.6"/>
</g>
<!-- paste -->
<rect x="91" y="191" width="21" height="26" rx="1" fill="#fff" stroke="#e9a13b" stroke-width="1.6"/>
<path d="M97 191 v-3 h3 q1 -3 2.5 -3 q1.5 0 2.5 3 h3 v3z" fill="#fff" stroke="#777" stroke-width="1.2"/>
<rect x="105" y="199" width="15" height="19" fill="#fff" stroke="#666" stroke-width="1.4"/>
<path d="M101 245 l3 3 l3 -3" fill="none" stroke="#444" stroke-width="1.2"/>
<g fill="none" stroke="#b8b8b8" stroke-width="1.2">
<path d="M136 186 l8 11 M144 186 l-8 11"/><circle cx="136.5" cy="199" r="2"/><circle cx="143.5" cy="199" r="2"/>
<rect x="131.5" y="213" width="9" height="13"/><path d="M136 217 h7 l3 3 v10 h-10z"/>
<path d="M158 220 l3 3 l3 -3"/>
<path d="M134 249 l7 5 l2 -2 l-5 -8z"/><path d="M141 248 l6 -7"/>
</g>
<!-- new slide -->
<g fill="none" stroke="#6f6f6f" stroke-width="1.4">
<rect x="199.5" y="191.5" width="30" height="21"/><rect x="202.5" y="194.5" width="24" height="15" stroke="#999"/>
<line x1="214" y1="194.5" x2="214" y2="209.5" stroke="#999"/>
<rect x="249.5" y="188.5" width="29" height="22"/><rect x="252.5" y="191.5" width="23" height="16" stroke="#999"/>
</g>
<path d="M205 184 v14 M198 191 h14" stroke="#33a852" stroke-width="2" fill="none"/>
<circle cx="269" cy="206" r="6" fill="#fff" stroke="#3b8ede" stroke-width="1.6"/><path d="M273 210.5 l5 5" stroke="#3b8ede" stroke-width="1.8"/>
<path d="M233 243 l3 3 l3 -3" fill="none" stroke="#444" stroke-width="1.1"/>
<g fill="none" stroke="#777" stroke-width="1.3">
<rect x="293.5" y="187.5" width="17" height="12"/><path d="M295.5 191.5 h13 M302 191.5 v6" stroke="#999"/>
<rect x="293.5" y="213.5" width="17" height="13"/><path d="M296 216 q1 -2 4 -1" stroke="#3b8ede"/>
<rect x="293.5" y="240.5" width="17" height="16"/><path d="M293.5 243.5 h17" stroke="#33a852" stroke-width="2"/><rect x="296" y="246" width="12" height="8" stroke="#999"/>
<path d="M343 192 l3 3 l3 -3 M330 245.5 l3 3 l3 -3" stroke="#444" stroke-width="1.1"/>
</g></svg>
<div class="t rb" style="left:201px;top:222px">新建</div>
<div class="t rb" style="left:189px;top:237px">幻灯片</div>
<div class="t rb" style="left:253px;top:222px">重用</div>
<div class="t rb" style="left:246px;top:237px">幻灯片</div>
<div class="t rb" style="left:89px;top:222px">粘贴</div>
<div class="t rb" style="left:315px;top:186px">版式</div>
<div class="t rb" style="left:315px;top:213px">重置</div>
<div class="t rb" style="left:315px;top:240px">节</div>


<!-- font group -->
<div class="a" style="left:379px;top:190px;width:173px;height:25px;background:#ededed;border:1px solid #e2e2e2;border-radius:3px"></div>
<div class="a" style="left:555px;top:190px;width:52px;height:25px;background:#ededed;border:1px solid #e2e2e2;border-radius:3px"></div>
<div class="t" style="left:558px;top:195px;font-size:15px;color:#b9b9b9">17</div>
<svg style="left:0;top:0" width="1640" height="290"><g fill="none" stroke="#c2c2c2" stroke-width="1.1">
<path d="M542 201 l3 3 l3 -3 M598 201 l3 3 l3 -3"/>
</g></svg>
<div class="t" style="left:613px;top:193px;font-size:18px;color:#a0a0a0">A</div>
<div class="t" style="left:643px;top:196px;font-size:15px;color:#a0a0a0">A</div>
<svg style="left:0;top:0" width="1640" height="290"><g fill="none" stroke="#a5a5a5" stroke-width="1.1">
<path d="M626 196 l2 -2 l2 2 M653 193 l2 2 l2 -2"/>
<line x1="663.5" y1="190" x2="663.5" y2="214" stroke="#e0e0e0"/>
<path d="M680 206 l5 -5 l3 3 l-5 5z"/>
<line x1="604.5" y1="224" x2="604.5" y2="248" stroke="#e0e0e0"/>
<path d="M546 237 l3 3 l3 -3 M589 237 l3 3 l3 -3 M637 237 l3 3 l3 -3 M680 237 l3 3 l3 -3"/>
<path d="M613 239 l10 -10 l3 3 l-10 10z" stroke="#999"/>
<line x1="520" y1="241" x2="535" y2="241"/><path d="M522 239 l-2 2 l2 2 M533 239 l2 2 l-2 2"/>
<line x1="491" y1="238" x2="510" y2="238"/>
</g>
<rect x="611" y="242" width="17" height="3" fill="#c8c8c8"/>
<rect x="654" y="242" width="17" height="3" fill="#c8c8c8"/>
</svg>
<div class="t" style="left:670px;top:192px;font-size:18px;color:#a0a0a0">A</div>
<div class="t" style="left:386px;top:228px;font-size:14px;font-weight:bold;color:#a8a8a8">B</div>
<div class="t" style="left:414px;top:228px;font-size:14px;font-style:italic;color:#a8a8a8;font-family:'Liberation Serif',serif">I</div>
<div class="t" style="left:439px;top:228px;font-size:14px;color:#a8a8a8;text-decoration:underline">U</div>
<div class="t" style="left:466px;top:228px;font-size:15px;color:#a8a8a8;text-shadow:1px 1px 0 #ddd">S</div>
<div class="t" style="left:493px;top:230px;font-size:13px;color:#a8a8a8">ab</div>
<div class="t" style="left:519px;top:227px;font-size:13px;color:#a8a8a8">AV</div>
<div class="t" style="left:563px;top:228px;font-size:15px;color:#a8a8a8">Aa</div>
<div class="t" style="left:655px;top:226px;font-size:16px;color:#a8a8a8">A</div>
<!-- paragraph group -->
<div class="a" style="left:708px;top:189px;width:42px;height:26px;background:#e6e6e6;border:1px solid #8a8a8a;border-radius:4px"></div>
<svg style="left:0;top:0" width="1640" height="290"><g fill="none" stroke="#8c8c8c" stroke-width="1.3">
<path d="M717 195.5 h12 M717 201.5 h12 M717 207.5 h12" stroke="#666"/>
<path d="M713 195.5 h2 M713 201.5 h2 M713 207.5 h2" stroke="#666" stroke-width="2"/>
<path d="M739 200 l3 3 l3 -3" stroke="#333" stroke-width="1.5"/>
<path d="M762 195.5 h10 M762 201.5 h10 M762 207.5 h10"/>
<path d="M784 201 l3 3 l3 -3 M880 201 l3 3 l3 -3 M924 194 l3 3 l3 -3 M924 221 l3 3 l3 -3 M924 248 l3 3 l3 -3 M877 236 l3 3 l3 -3" stroke="#bbb"/>
<path d="M801 195.5 h15 M808 200.5 h8 M808 205.5 h8 M801 209.5 h15 M806 203 h-5"/>
<path d="M828 195.5 h15 M835 200.5 h8 M835 205.5 h8 M828 209.5 h15 M828 203 h5"/>
<path d="M862 195.5 h9 M862 201.5 h9 M862 207.5 h9 M857 195 v14"/>
<path d="M714 229.5 h15 M714 233.5 h10 M714 237.5 h15 M714 241.5 h10"/>
<path d="M741 229.5 h15 M744 233.5 h9 M741 237.5 h15 M744 241.5 h9"/>
<path d="M769 229.5 h15 M774 233.5 h10 M769 237.5 h15 M774 241.5 h10"/>
<path d="M796 229.5 h15 M796 233.5 h15 M796 237.5 h15 M796 241.5 h15"/>
<path d="M823 228 v15 M838 228 v15 M825 233.5 h11 M825 237.5 h11 M825 241.5 h11"/>
<line x1="845.5" y1="224" x2="845.5" y2="248" stroke="#e0e0e0"/>
<path d="M853 233.5 h6 M862 233.5 h6 M853 237.5 h6 M862 237.5 h6" stroke="#bbb"/>
<path d="M901 186 v15 M898 198 l3 3 l3 -3 M909 192 v10" stroke="#aaa"/>
<rect x="899" y="214" width="17" height="13" stroke="#bbb"/>
<path d="M901 242 l5 -2 h8 v12 h-10z" stroke="#bbb"/>
</g></svg>
<div class="t" style="left:757px;top:193px;font-size:6px;line-height:6.5px;color:#999;white-space:pre">1
2
3</div>
<div class="t" style="left:908px;top:184px;font-size:9px;color:#aaa">A</div>
<!-- sensitivity -->
<svg style="left:0;top:0" width="1640" height="290">
<path d="M964.5 186.5 h14 l6 0 v30 h-20z" fill="#fff" stroke="#2b88d8" stroke-width="1.3"/>
<path d="M969 208 l14 -14 l5 5 l-14 14z" fill="#fff" stroke="#2b7cd3" stroke-width="1.6"/>
<path d="M971 207 l11 -11" stroke="#2b7cd3" stroke-width="1.3"/>
<path d="M983 193 l6 -6 l5 5 l-6 6z" fill="#fff" stroke="#2b7cd3" stroke-width="1.6"/>
<path d="M980 247 l3 3 l3 -3" fill="none" stroke="#444" stroke-width="1.2"/>
</svg>
<div class="t rb" style="left:963px;top:222px">敏感</div>
<div class="t rb" style="left:963px;top:238px">度</div>
<!-- drawing -->
<svg style="left:0;top:0" width="1640" height="290">
<rect x="1023" y="186.5" width="20" height="20" fill="#5aa0e6" stroke="#2b7cd3" stroke-width="1.2"/>
<circle cx="1041.5" cy="205.5" r="10" fill="#f6f6f8" stroke="#555" stroke-width="1.3"/>
<path d="M1036 243 l3 3 l3 -3 M1082 243 l3 3 l3 -3" fill="none" stroke="#444" stroke-width="1.3"/>
<rect x="1074.5" y="191" width="21" height="20" fill="#f6d98a" stroke="#ec9a3a" stroke-width="1.3"/>
<rect x="1068.5" y="186.5" width="12" height="12" fill="#f8f8f8" stroke="#666" stroke-width="1.4"/>
<rect x="1086.5" y="204" width="12" height="12" fill="#f8f8f8" stroke="#666" stroke-width="1.4"/>
<rect x="1120.5" y="186.5" width="30" height="30" rx="3" fill="#f2f2f2" stroke="#ccc" stroke-width="1.4"/>
<path d="M1130 215 q2 -4 5 -3 l14 -16" fill="none" stroke="#bbb" stroke-width="1.6"/>
<path d="M1133 242 l3 3 l3 -3" fill="none" stroke="#ccc" stroke-width="1.1"/>
<g fill="none" stroke="#b9b9b9" stroke-width="1.3">
<path d="M1173 196 l5 -6 l5 5 l-5 4z"/><rect x="1169" y="200" width="17" height="2.5" fill="#c9c9c9" stroke="none"/>
<path d="M1171 226 v-12 h10 M1175 223 l10 -10 l2 2 l-10 10z"/><rect x="1169" y="227" width="17" height="2.5" fill="#c9c9c9" stroke="none"/>
<path d="M1170 252 l4 -8 h12 l-4 8z M1182 252 l4 -8"/>
<path d="M1246 193 l3 3 l3 -3 M1246 220 l3 3 l3 -3 M1246 247 l3 3 l3 -3"/>
</g></svg>
<div class="t rb" style="left:1025px;top:221px">形状</div>
<div class="t rb" style="left:1071px;top:221px">排列</div>
<div class="t rb dis" style="left:1109px;top:221px">快速样式</div>
<div class="t rb dis" style="left:1190px;top:186px">形状填充</div>
<div class="t rb dis" style="left:1190px;top:213px">形状轮廓</div>
<div class="t rb dis" style="left:1190px;top:240px">形状效果</div>
<!-- editing -->
<svg style="left:0;top:0" width="1640" height="290"><g fill="none" stroke="#444" stroke-width="1.3">
<circle cx="1295" cy="192" r="5.5"/><line x1="1291" y1="196" x2="1285.5" y2="201.5"/>
<path d="M1287 220 q-3 4 1 8 l4 1 M1290 227 l2 2 l-2 2" stroke="#2b7cd3"/>
<path d="M1286 241 v14 l3.5 -3.5 l3 5 l2 -1 l-3 -5 h4.5z" stroke="#333"/>
<path d="M1344 219 l3 3 l3 -3 M1335 246 l3 3 l3 -3 M1393 244 l3 3 l3 -3" stroke-width="1.2"/>
</g>
<text x="1291" y="219" font-size="9" fill="#b146c2" font-family="Liberation Sans">b</text>
<text x="1294" y="230" font-size="9" fill="#2b7cd3" font-family="Liberation Sans">c</text>
<rect x="1388" y="185" width="18" height="26" rx="9" fill="#72aee8" stroke="#333" stroke-width="1.3"/>
<path d="M1385 205 q0 10 11 10 q11 0 11 -10 M1396 215 v4" fill="none" stroke="#333" stroke-width="1.3"/>
<path d="M1447 186 l-6 12 h5 l-3 9 l9 -13 h-5 l4 -8z" fill="#f3a32e" stroke="#d67b14" stroke-width="0.8"/>
<rect x="1446.5" y="193.5" width="27" height="19" fill="none" stroke="#666" stroke-width="1.3"/>
<rect x="1449.5" y="196.5" width="21" height="13" fill="none" stroke="#888" stroke-width="1"/>
<path d="M1449.5 200.5 h21 M1462 200.5 v9" stroke="#888" fill="none"/>
<circle cx="1525" cy="197" r="5" fill="none" stroke="#e5484d" stroke-width="3"/>
<circle cx="1519.5" cy="204" r="5" fill="none" stroke="#1f9ae0" stroke-width="3"/>
<circle cx="1530.5" cy="204" r="5" fill="none" stroke="#1f9ae0" stroke-width="3"/>
</svg>
<div class="t rb" style="left:1305px;top:186px">查找</div>
<div class="t rb" style="left:1305px;top:213px">替换</div>
<div class="t rb" style="left:1305px;top:240px">选择</div>
<div class="t rb" style="left:1384px;top:222px">听写</div>
<div class="t rb" style="left:1445px;top:222px">设计</div>
<div class="t rb" style="left:1445px;top:237px">灵感</div>
<div class="t rb" style="left:1505px;top:222px">保存到</div>
<div class="t rb" style="left:1498px;top:237px">百度网盘</div>

<!-- thumbnails panel -->
<div class="a" style="left:238px;top:286px;width:16px;height:660px;background:#e3e3e3"></div>
<div class="a" style="left:238px;top:286px;width:16px;height:16px;background:#fff;border:1px solid #cfcfcf"></div>
<div class="a" style="left:238px;top:302px;width:16px;height:101px;background:#fff;border:1px solid #cfcfcf"></div>
<div class="a" style="left:238px;top:930px;width:16px;height:16px;background:#fff;border:1px solid #cfcfcf"></div>
<svg style="left:0;top:0" width="300" height="960"><path d="M242 296.5 h8 l-4 -4z M242 936.5 h8 l-4 4z" fill="#555"/></svg>
<div class="a" style="left:257px;top:286px;width:1px;height:663px;background:#dcdcdc"></div>
<div class="t" style="left:13px;top:302px;font-size:15px;color:#c43e1c">0</div>
<div class="t" style="left:13px;top:456px;font-size:15px;color:#444">1</div>
<div class="t" style="left:13px;top:609px;font-size:15px;color:#444">2</div>
<div class="t" style="left:13px;top:763px;font-size:15px;color:#444">3</div>
<div class="t" style="left:13px;top:916px;font-size:15px;color:#444">4</div>
<div class="a" style="left:37px;top:302px;width:180px;height:137px;border:2.5px solid #c8432a;border-radius:5px;background:#fff"></div>
<div class="a" style="left:39px;top:459px;width:176px;height:132px;border:1px solid #d2d2d2;border-radius:4px;background:#fff"></div>
<div class="a" style="left:39px;top:612px;width:176px;height:132px;border:1px solid #d2d2d2;border-radius:4px;background:#fff"></div>
<div class="a" style="left:39px;top:766px;width:176px;height:132px;border:1px solid #d2d2d2;border-radius:4px;background:#fff"></div>
<div class="a" style="left:39px;top:919px;width:176px;height:30px;border:1px solid #d2d2d2;border-bottom:none;border-radius:4px 4px 0 0;background:#fff;overflow:hidden"></div>
<!-- thumb 0 content -->
<div class="a" style="left:41px;top:316px;width:78px;height:1px;background:linear-gradient(90deg,#5050c0,rgba(80,80,192,0))"></div>
<div class="a" style="left:41px;top:320px;width:144px;height:10px;background:#dde0e8"></div>
<div class="t" style="left:42px;top:321px;font-size:10px;color:#334;transform:scale(.673,.7);transform-origin:0 0">西安交通大学第七届丝路研讨会-机械分论坛</div>
<div class="t" style="left:64.5px;top:361px;font-size:10px;font-weight:bold;color:#1f3060;font-family:'Liberation Serif',serif;transform:scale(.962,.95);transform-origin:0 0">网联自动驾驶汽车拟人化决策</div>
<div class="t" style="left:121px;top:395px;font-size:5px;font-weight:bold;color:#333">杭 鹏</div>
<div class="a" style="left:108px;top:402px;width:38px;height:1px;background:#b0b0b0"></div>
<div class="a" style="left:99px;top:408px;width:56px;height:1px;background:#b0b0b0"></div>
<div class="a" style="left:107px;top:414px;width:40px;height:1.5px;background:#6c88c8"></div>
<div class="a" style="left:118px;top:419px;width:18px;height:1px;background:#b0b0b0"></div>
<div class="a" style="left:58px;top:427px;width:138px;height:1px;background:linear-gradient(90deg,rgba(60,60,180,0),#5050c0,rgba(60,60,180,0))"></div>
<!-- thumb 1 content -->
<div class="a" style="left:41px;top:470px;width:80px;height:1px;background:linear-gradient(90deg,#6060c0,rgba(80,80,192,0))"></div>
<div class="t" style="left:122px;top:477px;font-size:9px;font-weight:bold;color:#1f3060">内容</div>
<div class="t" style="left:76px;top:500.6px;font-size:10px;color:#1f3060;line-height:24px;white-space:pre;font-weight:bold;transform:scale(.565);transform-origin:0 0">◆  1. 个人简介
◆  2. 研究内容——网联自动驾驶汽车拟人化决策
◆  3. 已发表成果</div>
<div class="a" style="left:58px;top:581px;width:138px;height:1px;background:linear-gradient(90deg,rgba(60,60,180,0),#5050c0,rgba(60,60,180,0))"></div>
<div class="a" style="left:183px;top:305px;width:7px;height:10px;background:linear-gradient(180deg,#d0505e 0 40%,#fff 40% 50%,#d9b040 50% 85%,#fff 85%);border-radius:0 0 3px 3px;border:0.5px solid #ccc"></div><div class="a" style="left:191px;top:306px;width:20px;height:2px;background:#d86a78"></div><div class="a" style="left:191px;top:309px;width:20px;height:1px;background:#9a9aa8"></div><div class="a" style="left:191px;top:311px;width:20px;height:2px;background:#d86a78"></div>
<div class="a" style="left:183px;top:462px;width:7px;height:10px;background:linear-gradient(180deg,#d0505e 0 40%,#fff 40% 50%,#d9b040 50% 85%,#fff 85%);border-radius:0 0 3px 3px;border:0.5px solid #ccc"></div><div class="a" style="left:191px;top:463px;width:20px;height:2px;background:#d86a78"></div><div class="a" style="left:191px;top:466px;width:20px;height:1px;background:#9a9aa8"></div><div class="a" style="left:191px;top:468px;width:20px;height:2px;background:#d86a78"></div>
<div class="a" style="left:183px;top:615px;width:7px;height:10px;background:linear-gradient(180deg,#d0505e 0 40%,#fff 40% 50%,#d9b040 50% 85%,#fff 85%);border-radius:0 0 3px 3px;border:0.5px solid #ccc"></div><div class="a" style="left:191px;top:616px;width:20px;height:2px;background:#d86a78"></div><div class="a" style="left:191px;top:619px;width:20px;height:1px;background:#9a9aa8"></div><div class="a" style="left:191px;top:621px;width:20px;height:2px;background:#d86a78"></div>
<div class="a" style="left:183px;top:769px;width:7px;height:10px;background:linear-gradient(180deg,#d0505e 0 40%,#fff 40% 50%,#d9b040 50% 85%,#fff 85%);border-radius:0 0 3px 3px;border:0.5px solid #ccc"></div><div class="a" style="left:191px;top:770px;width:20px;height:2px;background:#d86a78"></div><div class="a" style="left:191px;top:773px;width:20px;height:1px;background:#9a9aa8"></div><div class="a" style="left:191px;top:775px;width:20px;height:2px;background:#d86a78"></div>
<div class="a" style="left:183px;top:922px;width:7px;height:10px;background:linear-gradient(180deg,#d0505e 0 40%,#fff 40% 50%,#d9b040 50% 85%,#fff 85%);border-radius:0 0 3px 3px;border:0.5px solid #ccc"></div><div class="a" style="left:191px;top:923px;width:20px;height:2px;background:#d86a78"></div><div class="a" style="left:191px;top:926px;width:20px;height:1px;background:#9a9aa8"></div><div class="a" style="left:191px;top:928px;width:20px;height:2px;background:#d86a78"></div>

<div class="t" style="left:42px;top:615px;font-size:5px;color:#444">个人简介</div>
<div class="a" style="left:41px;top:624px;width:130px;height:1px;background:linear-gradient(90deg,#6060c0,rgba(80,80,192,0))"></div>
<div class="t" style="left:46px;top:628px;font-size:5px;color:#223;font-weight:bold">■ 教育工作经历</div>
<div class="a" style="left:49px;top:634px;width:116px;height:16px;background:#e5efd9"></div>
<div class="a" style="left:49px;top:655px;width:116px;height:16px;background:#e5efd9"></div>
<div class="a" style="left:49px;top:676px;width:116px;height:16px;background:#e3e9f5"></div>
<div class="a" style="left:49px;top:697px;width:116px;height:16px;background:#e3e9f5"></div>
<div class="a" style="left:49px;top:718px;width:116px;height:15px;background:#e3e9f5"></div>
<div class="a" style="left:52px;top:636px;width:85px;height:2px;background:#a0a0a0"></div><div class="a" style="left:54px;top:641px;width:70px;height:1px;background:#c0c0c0"></div><div class="a" style="left:54px;top:645px;width:62px;height:1px;background:#aaa"></div><div class="a" style="left:178px;top:636px;width:33px;height:2px;background:#555"></div><div class="a" style="left:182px;top:642px;width:7px;height:9px;background:linear-gradient(180deg,#d0505e 0 45%,#d9b040 45%);border-radius:0 0 3px 3px;opacity:.8"></div><div class="a" style="left:190px;top:644px;width:20px;height:5px;background:repeating-linear-gradient(180deg,#8a90a8 0 1px,#fff 1px 2px)"></div>
<div class="a" style="left:52px;top:657px;width:85px;height:2px;background:#a0a0a0"></div><div class="a" style="left:54px;top:662px;width:70px;height:1px;background:#c0c0c0"></div><div class="a" style="left:54px;top:666px;width:62px;height:1px;background:#aaa"></div><div class="a" style="left:178px;top:657px;width:33px;height:2px;background:#555"></div><div class="a" style="left:182px;top:663px;width:9px;height:9px;border-radius:50%;background:#2a4a80;opacity:.85"></div><div class="a" style="left:193px;top:664px;width:16px;height:5px;background:#3a4a70;opacity:.7"></div>
<div class="a" style="left:52px;top:678px;width:85px;height:2px;background:#a0a0a0"></div><div class="a" style="left:54px;top:683px;width:70px;height:1px;background:#c0c0c0"></div><div class="a" style="left:54px;top:687px;width:62px;height:1px;background:#aaa"></div><div class="a" style="left:178px;top:678px;width:33px;height:2px;background:#555"></div><div class="a" style="left:182px;top:684px;width:7px;height:7px;border-radius:50%;background:#b8bcd0"></div><div class="a" style="left:192px;top:685px;width:19px;height:5px;background:repeating-linear-gradient(90deg,#6a70a0 0 3px,#fff 3px 5px);opacity:.7"></div>
<div class="a" style="left:52px;top:699px;width:85px;height:2px;background:#a0a0a0"></div><div class="a" style="left:54px;top:704px;width:70px;height:1px;background:#c0c0c0"></div><div class="a" style="left:54px;top:708px;width:62px;height:1px;background:#aaa"></div><div class="a" style="left:178px;top:699px;width:33px;height:2px;background:#555"></div><div class="t" style="left:187px;top:702px;font-size:9px;font-weight:bold;color:#2a3a7a;opacity:.85">NUS</div>
<div class="a" style="left:52px;top:720px;width:85px;height:2px;background:#a0a0a0"></div><div class="a" style="left:54px;top:725px;width:70px;height:1px;background:#c0c0c0"></div><div class="a" style="left:54px;top:729px;width:62px;height:1px;background:#aaa"></div><div class="a" style="left:178px;top:720px;width:33px;height:2px;background:#555"></div><div class="a" style="left:180px;top:726px;width:6px;height:6px;border-radius:50%;background:#2a4a80;opacity:.85"></div><div class="a" style="left:188px;top:727px;width:24px;height:4px;background:repeating-linear-gradient(90deg,#2a3a70 0 3px,#fff 3px 4px);opacity:.8"></div>

<div class="a" style="left:58px;top:734px;width:138px;height:1px;background:linear-gradient(90deg,rgba(60,60,180,0),#7070c8,rgba(60,60,180,0))"></div>
<div class="t" style="left:42px;top:769px;font-size:5px;color:#444">个人简介</div>
<div class="a" style="left:41px;top:778px;width:130px;height:1px;background:linear-gradient(90deg,#6060c0,rgba(80,80,192,0))"></div>
<div class="t" style="left:46px;top:782px;font-size:5px;color:#223;font-weight:bold">■ 研究方向</div>
<div class="a" style="left:51px;top:790px;width:2px;height:1px;background:#5060a0"></div><div class="a" style="left:56px;top:790px;width:50px;height:1.5px;background:#c4c4c4"></div>
<div class="a" style="left:51px;top:795px;width:2px;height:1px;background:#5060a0"></div><div class="a" style="left:56px;top:795px;width:57px;height:1.5px;background:#c4c4c4"></div>
<div class="a" style="left:51px;top:800px;width:2px;height:1px;background:#5060a0"></div><div class="a" style="left:56px;top:800px;width:30px;height:1.5px;background:#c4c4c4"></div>
<div class="t" style="left:46px;top:806px;font-size:5px;color:#223;font-weight:bold">■ 科研项目</div>
<div class="a" style="left:51px;top:815.0px;width:2px;height:1px;background:#5060a0"></div><div class="a" style="left:56px;top:815.0px;width:105px;height:1.5px;background:#c8c8c8"></div><div class="a" style="left:51px;top:819.2px;width:2px;height:1px;background:#5060a0"></div><div class="a" style="left:56px;top:819.2px;width:95px;height:1.5px;background:#c8c8c8"></div><div class="a" style="left:51px;top:823.4px;width:2px;height:1px;background:#5060a0"></div><div class="a" style="left:56px;top:823.4px;width:125px;height:1.5px;background:#c8c8c8"></div><div class="a" style="left:51px;top:827.6px;width:2px;height:1px;background:#5060a0"></div><div class="a" style="left:56px;top:827.6px;width:132px;height:1.5px;background:#c8c8c8"></div><div class="a" style="left:51px;top:831.8px;width:2px;height:1px;background:#5060a0"></div><div class="a" style="left:56px;top:831.8px;width:50px;height:1.5px;background:#c8c8c8"></div><div class="a" style="left:51px;top:836.0px;width:2px;height:1px;background:#5060a0"></div><div class="a" style="left:56px;top:836.0px;width:110px;height:1.5px;background:#c8c8c8"></div><div class="a" style="left:51px;top:840.2px;width:2px;height:1px;background:#5060a0"></div><div class="a" style="left:56px;top:840.2px;width:120px;height:1.5px;background:#c8c8c8"></div><div class="a" style="left:51px;top:844.4px;width:2px;height:1px;background:#5060a0"></div><div class="a" style="left:56px;top:844.4px;width:70px;height:1.5px;background:#c8c8c8"></div><div class="a" style="left:51px;top:848.6px;width:2px;height:1px;background:#5060a0"></div><div class="a" style="left:56px;top:848.6px;width:130px;height:1.5px;background:#c8c8c8"></div><div class="a" style="left:51px;top:852.8px;width:2px;height:1px;background:#5060a0"></div><div class="a" style="left:56px;top:852.8px;width:45px;height:1.5px;background:#c8c8c8"></div><div class="a" style="left:51px;top:857.0px;width:2px;height:1px;background:#5060a0"></div><div class="a" style="left:56px;top:857.0px;width:105px;height:1.5px;background:#c8c8c8"></div>
<div class="t" style="left:171px;top:811px;font-size:8px;font-weight:bold;color:#2a9a5a;letter-spacing:-0.4px;font-family:'Liberation Serif',serif">SCHAEFFLER</div>
<div class="a" style="left:199px;top:832px;width:13px;height:12px;background:linear-gradient(160deg,#eee 0 40%,#e03030 40%);opacity:.85"></div>
<div class="a" style="left:198px;top:852px;width:13px;height:9px;border-radius:50%;border:1.5px solid #2050a0"></div>
<div class="a" style="left:196px;top:862px;width:16px;height:3px;background:#2050a0;opacity:.7"></div>
<div class="a" style="left:199px;top:867px;width:9px;height:9px;border-radius:50%;border:1.5px solid #d03040"></div>
<div class="a" style="left:197px;top:878px;width:14px;height:3px;background:#444;opacity:.6"></div>
<div class="a" style="left:41px;top:869px;width:9px;height:12px;background:#2a3a9a"></div>
<div class="a" style="left:51px;top:873px;width:18px;height:5px;background:repeating-linear-gradient(180deg,#6070b0 0 1px,#fff 1px 2px);opacity:.8"></div>
<div class="a" style="left:72px;top:870px;width:30px;height:12px;background:#1e4a96"></div>
<div class="a" style="left:74px;top:872px;width:8px;height:8px;border-radius:50%;background:#d84030"></div>
<div class="a" style="left:105px;top:867px;width:22px;height:10px;background:#2a4a9a;clip-path:polygon(50% 0,100% 100%,0 100%)"></div>
<div class="a" style="left:107px;top:877px;width:18px;height:2px;background:#2a4a9a;opacity:.7"></div>
<div class="a" style="left:135px;top:869px;width:15px;height:8px;border-radius:50%;border:1px solid #555"></div>
<div class="a" style="left:135px;top:879px;width:15px;height:2px;background:#888;opacity:.6"></div>
<div class="t" style="left:155px;top:872px;font-size:6px;font-weight:bold;color:#e0a020;font-family:'Liberation Serif',serif;letter-spacing:-0.2px">@ntinental</div>
<div class="a" style="left:58px;top:888px;width:138px;height:1px;background:linear-gradient(90deg,rgba(60,60,180,0),#7070c8,rgba(60,60,180,0))"></div>
<div class="t" style="left:42px;top:922px;font-size:5px;color:#444">个人简介</div>
<div class="a" style="left:41px;top:931px;width:130px;height:1px;background:linear-gradient(90deg,#6060c0,rgba(80,80,192,0))"></div>
<div class="t" style="left:46px;top:935px;font-size:5px;color:#223;font-weight:bold">■ 荣誉与奖项</div>
<div class="a" style="left:50px;top:942px;width:120px;height:2px;background:#8090c0"></div>

<!-- slide -->
<div class="a" style="left:538px;top:295px;width:803px;height:603px;background:#fff;border:1px solid #d6d6d6"></div>
<div class="a" style="left:540px;top:351px;width:470px;height:3px;background:linear-gradient(90deg,#2424b4 0%,#4545c4 20%,#8686dc 45%,#c4c4ee 65%,rgba(230,230,250,.5) 82%,rgba(255,255,255,0) 100%)"></div>
<div class="a" style="left:539px;top:364px;width:669px;height:45px;background:#d9dde5"></div>
<div class="t" style="left:549px;top:372.5px;font-size:30px;letter-spacing:1.05px;font-weight:bold;color:#121f62">西安交通大学第七届丝路研讨会-机械分论坛</div>
<div class="t" style="left:652px;top:553.5px;font-size:45px;letter-spacing:-0.45px;color:#10206c">网联自动驾驶汽车拟人化决策</div>
<div class="t" style="left:911px;top:708px;font-size:23px;font-weight:bold;color:#111">杭 鹏</div>
<div class="t" style="left:852px;top:740px;font-size:16.5px;color:#111">Ph.D., Research Fellow</div>
<div class="t" style="left:811px;top:767px;font-size:17px;color:#111">Nanyang Technological University</div>
<div class="t" style="left:850px;top:794px;font-size:17.2px;color:#1a5fb4;text-decoration:underline">peng.hang@ntu.edu.sg</div>
<div class="t" style="left:898px;top:820px;font-size:18.5px;color:#111">8/12/2021</div>
<div class="a" style="left:570px;top:858px;width:740px;height:3px;background:linear-gradient(90deg,rgba(255,255,255,0) 0%,rgba(150,150,230,.45) 15%,#6a6ad8 35%,#2626c4 50%,#6a6ad8 65%,rgba(150,150,230,.45) 85%,rgba(255,255,255,0) 100%)"></div>
<!-- NTU logo -->
<svg style="left:1194px;top:303px" width="39" height="50" viewBox="0 0 39 50">
<path d="M0.5 0.5 h38 v27 q0 15 -19 22 q-19 -7 -19 -22z" fill="#fff" stroke="#8a8a8a" stroke-width="0.9"/>
<rect x="1" y="1" width="37" height="14" fill="#c8233a"/><g fill="#c8233a"><rect x="5" y="14" width="4" height="3"/><rect x="12" y="14" width="4" height="3"/><rect x="19" y="14" width="4" height="3"/><rect x="26" y="14" width="4" height="3"/><rect x="33" y="14" width="4" height="3"/></g>
<g fill="none" stroke="#f2c9cf" stroke-width="1"><circle cx="7" cy="7" r="3.2"/><circle cx="31.5" cy="7" r="3.2"/></g>
<circle cx="19.2" cy="7" r="3" fill="#e8c070"/><circle cx="19.2" cy="7" r="1.2" fill="#fff"/>
<path d="M4 30 q1 -6 6 -7 q4 -2 6 2 q6 -2 12 0 q4 -3 6 -1 q-2 2 -5 2 q1 4 -2 6 v4 h-3 v-3 h-6 v3 h-3 v-3 q-4 1 -5 4 h-3 q1 -4 3 -5 q-3 -1 -6 -2z" fill="#d9a92a" stroke="#4a3a20" stroke-width="0.6"/>
<path d="M8 23 q3 -3 7 -1 q1 3 -1 7 q-4 1 -6 -2z" fill="#2f4a8a"/>
<path d="M22 19 q4 -2 8 -2 l-3 2z" fill="#2b5fa0"/>
</svg>
<div class="t" style="left:1239px;top:302.6px;font-size:19.6px;color:#c2183c;-webkit-text-stroke:0.5px #c2183c;font-family:'Liberation Serif',serif;transform:scaleX(.939);transform-origin:0 0">NANYANG</div>
<div class="t" style="left:1239px;top:321.9px;font-size:10.5px;color:#2a2d45;font-family:'Liberation Serif',serif;transform:scaleX(1.027);transform-origin:0 0">TECHNOLOGICAL</div>
<div class="t" style="left:1239px;top:331px;font-size:16.6px;color:#c2183c;-webkit-text-stroke:0.4px #c2183c;font-family:'Liberation Serif',serif;transform:scaleX(.914);transform-origin:0 0">UNIVERSITY</div>
<!-- right scrollbar -->
<div class="a" style="left:1621px;top:286px;width:15px;height:560px;background:#e6e6e6"></div>
<div class="a" style="left:1621px;top:286px;width:15px;height:16px;background:#fff;border:1px solid #cfcfcf"></div>
<div class="a" style="left:1621px;top:302px;width:15px;height:19px;background:#fff;border:1px solid #cfcfcf"></div>
<div class="a" style="left:1621px;top:838px;width:15px;height:16px;background:#fff;border:1px solid #cfcfcf"></div>
<svg style="left:0;top:0" width="1640" height="960"><g fill="#555">
<path d="M1624.5 297.5 h8 l-4 -4z M1624.5 843 h8 l-4 4z"/>
<path d="M1624.5 867 h8 l-4 -4z M1624.5 872 h8 l-4 -4z" />
<path d="M1624.5 878 h8 l-4 4z M1624.5 883 h8 l-4 4z"/>
<path d="M1624.5 927 h8 l-4 -4z M1624.5 937 h8 l-4 4z"/>
</g></svg>
<div class="a" style="left:1621px;top:917px;width:15px;height:15px;background:#fff;border:1px solid #cfcfcf"></div>
<div class="a" style="left:1621px;top:932px;width:15px;height:15px;background:#fff;border:1px solid #cfcfcf"></div>
<svg style="left:0;top:0" width="1640" height="960"><g fill="#555"><path d="M1624.5 927 h8 l-4 -4z M1624.5 937 h8 l-4 4z"/></g></svg>
<svg style="left:0;top:0" width="1500" height="700"><path d="M1404.5 618.5 v13.5 l3.3 -3.2 l2.6 5.4 l2.1 -1 l-2.5 -5.2 h4.4 z" fill="#fff" stroke="#222" stroke-width="1.1" stroke-linejoin="round"/></svg>
<!-- notes -->
<div class="a" style="left:258px;top:911px;width:1378px;height:1px;background:#d8d8d8"></div>
<div class="t" style="left:275px;top:924px;font-size:24px;letter-spacing:-0.5px;color:#5a5a5a">单击此处添加备注</div>
<!-- status bar -->
<div class="a" style="left:0;top:949px;width:1636px;height:24px;background:linear-gradient(180deg,#f4f4f4 0 92%,#fff 92%)"></div>
<div class="t" style="left:9px;top:954px;font-size:13px;color:#333">幻灯片 第 0 张，共 0 .. 26 张</div>
<div class="t" style="left:226px;top:954px;font-size:13px;color:#333">中文(中国)</div>
<div class="t" style="left:322px;top:954px;font-size:13px;color:#333">辅助功能: 调查</div>
<div class="t" style="left:1106px;top:954px;font-size:13px;color:#333">备注</div>
<div class="t" style="left:1168px;top:954px;font-size:13px;color:#333">显示器设置</div>
<div class="a" style="left:1253px;top:950px;width:42px;height:21px;background:#e0e0e0"></div>
<div class="t" style="left:1576px;top:954px;font-size:13px;color:#333">79%</div>
<svg style="left:0;top:0" width="1640" height="980"><g fill="none" stroke="#444" stroke-width="1.2">
<path d="M194 954.5 h7 v13 h-7z M201 960 l6 -5 M201 962 l6 6" />
<circle cx="311" cy="955" r="2"/><path d="M306 960 h10 M311 958 v5 l-3 5 M311 963 l3 5"/>
<path d="M1089 958.5 h6 l2 -3 l2 3 h6 M1089 962.5 h16 M1089 966.5 h16"/>
<path d="M1151 955.5 h14 v9 h-14z M1158 964.5 v3 M1154 967.5 h7"/>
<path d="M1266.5 954.5 h14 v12 h-14z M1270 957.5 h7 v5 h-7z M1268 957 v7"/>
<path d="M1309.5 954.5 h5 v5 h-5z M1317.5 954.5 h5 v5 h-5z M1309.5 961.5 h5 v5 h-5z M1317.5 961.5 h5 v5 h-5z"/>
<path d="M1351 955 q3 -1 6 1 q3 -2 6 -1 v12 q-3 -1 -6 1 q-3 -2 -6 -1z M1357 956 v12"/>
<path d="M1394.5 954.5 h13 v7 h-13z M1401 961.5 v6 M1397 967.5 h8"/>
<path d="M1429 960.5 h8 M1553 960.5 h9 M1557.5 956 v9 M1443 960.5 h105"/>
<path d="M1618 960.5 l3 -3 M1618 960.5 l3 3 M1630 960.5 l-3 -3 M1630 960.5 l-3 3 M1624 954.5 l-2 2 M1624 954.5 l2 2 M1624 966.5 l-2 -2 M1624 966.5 l2 -2"/><rect x="1620.5" y="957.5" width="7" height="6"/>
</g>
<rect x="1482" y="955" width="4" height="11" fill="#555"/>
</svg>

<div id="bottomband" class="a"></div>
<div class="a" style="left:0;top:972px;width:1637px;height:2px;background:#0c5272"></div>
<div class="a" style="left:0;top:1000px;width:243px;height:30px;background:#0e0f10"></div>
<svg style="left:0;top:1000px" width="40" height="30"><g fill="#fff">
<rect x="1.5" y="6" width="18" height="14" rx="2"/><path d="M6 16 q1 -5 7 -5 v-2 l3 3 l-3 3 v-2 q-4 0 -7 3z" fill="#0e0f10"/><rect x="5" y="21.5" width="11" height="2.5" rx="1"/>
<rect x="26" y="4" width="8" height="13" rx="4"/><path d="M23 13 q0 7 7 7 q7 0 7 -7" fill="none" stroke="#fff" stroke-width="1.8"/><rect x="29" y="20" width="2" height="4"/><rect x="26" y="23" width="8" height="2"/>
</g></svg>
<div class="t" style="left:41px;top:1005px;font-size:20px;letter-spacing:0.4px;color:#fff">杭鹏~NTU的屏幕共享</div>

<div id="taskbar" class="a"></div>
<svg style="left:0;top:1030px" width="120" height="50"><g fill="#fff">
<path d="M20 17 l8.5 -1.2 v8.7 h-8.5z M29.5 15.7 l11 -1.6 v10.4 h-11z M20 25.5 h8.5 v8.7 l-8.5 -1.2z M29.5 25.5 h11 v10.4 l-11 -1.6z"/>
</g>
<g fill="#fff" stroke="#22363f" stroke-width="1.6">
<circle cx="86.3" cy="30.2" r="8.6"/><circle cx="86.5" cy="19" r="8.6"/><circle cx="97.8" cy="18.7" r="8.6"/><circle cx="99.3" cy="30.5" r="8.6"/>
<path d="M92.3 24.2 A8.6 8.6 0 0 1 92 36.8" fill="none"/>
</g></svg>
<div class="a" style="left:125px;top:1033px;width:205px;height:42px;background:#e9e9e9"></div>
<div class="a" style="left:330px;top:1033px;width:70px;height:42px;background:#2b8ef4"></div>
<div class="t" style="left:335px;top:1046px;font-size:15px;color:#fff">搜索一下</div>
<div class="t" style="left:175px;top:1045px;font-size:15px;color:#111">景观造雾</div>
<svg style="left:125px;top:1033px" width="60" height="42"><g>
<circle cx="20" cy="22" r="9" fill="none" stroke="#2a8fe8" stroke-width="4.5"/>
<path d="M11 21.5 h18" stroke="#2a8fe8" stroke-width="3.5"/>
<path d="M22 29 h9" stroke="#e9e9e9" stroke-width="3.5"/>
<path d="M9 33 q-3 -4 6 -14 q12 -12 17 -8" fill="none" stroke="#3aa0f0" stroke-width="1.8"/>
<path d="M35 24 l3 -5 l3 5z" fill="#888"/></g></svg>
<!-- chrome -->
<div class="a" style="left:422px;top:1041px;width:28px;height:28px;border-radius:50%;background:conic-gradient(from -60deg,#db4437 0 120deg,#0f9d58 120deg 240deg,#f4b400 240deg 360deg)"></div>
<div class="a" style="left:429px;top:1048px;width:14px;height:14px;border-radius:50%;background:#fff"></div>
<div class="a" style="left:431px;top:1050px;width:10px;height:10px;border-radius:50%;background:#4285f4"></div>
<!-- green ie -->
<div class="a" style="left:484px;top:1041px;width:28px;height:28px;border-radius:50%;background:radial-gradient(circle at 40% 35%,#8de05a,#2fa52a)"></div>
<div class="t" style="left:488px;top:1039px;font-size:27px;font-weight:bold;color:#fff">e</div>
<!-- folder -->
<svg style="left:545px;top:1040px" width="30" height="30"><path d="M1 4 h10 l3 3 h15 v20 h-28z" fill="#f3c448"/><path d="M1 9 h28 v18 h-28z" fill="#fcd86a"/><path d="M8 27 v-8 h14 v8 h-3 v-5 h-8 v5z" fill="#2f8ee0"/></svg>
<!-- red app -->
<div class="a" style="left:607px;top:1040px;width:30px;height:30px;border-radius:7px;background:linear-gradient(135deg,#f04a14,#ff7a1a)"></div>
<svg style="left:607px;top:1040px" width="30" height="30"><path d="M7 8 l8 7 l-8 7z M23 8 l-8 7 l8 7z" fill="#fff" opacity=".95"/><path d="M7 22 l16 -14" stroke="#f06030" stroke-width="1.5"/></svg>
<!-- word -->
<svg style="left:669px;top:1040px" width="30" height="30"><path d="M10 5 h17 v21 h-17z" fill="#fff"/><path d="M14 9 h10 M14 13 h10 M14 17 h10 M14 21 h10" stroke="#2b579a" stroke-width="1.6"/><path d="M1 4 l15 -3 v28 l-15 -3z" fill="#2b579a"/><text x="3" y="20" font-size="11" font-weight="bold" fill="#fff" font-family="Liberation Sans">W</text></svg>
<!-- tencent meeting active -->
<div class="a" style="left:716px;top:1030px;width:61px;height:50px;background:#45535c"></div>
<div class="a" style="left:732px;top:1041px;width:28px;height:28px;border-radius:6px;background:linear-gradient(135deg,#2a8cff,#0a5cf0)"></div>
<svg style="left:732px;top:1041px" width="28" height="28"><path d="M5 17 l5 -6 l4 5 l4 -6 l5 7 l-3 2 l-2 -3 l-4 4 l-4 -4 l-2 3z" fill="#fff"/></svg>
<!-- wechat -->
<div class="a" style="left:778px;top:1030px;width:61px;height:50px;background:#a36935"></div>
<div class="a" style="left:778px;top:1077px;width:61px;height:3px;background:#f57c1f"></div>
<svg style="left:793px;top:1041px" width="32" height="30"><ellipse cx="11" cy="10" rx="10" ry="8.5" fill="#3ec84e"/><ellipse cx="20" cy="18" rx="10" ry="8" fill="#f0f0f0"/><circle cx="7.5" cy="8" r="1.3" fill="#1a5a20"/><circle cx="14" cy="8" r="1.3" fill="#1a5a20"/><circle cx="17" cy="17" r="1.1" fill="#666"/><circle cx="23" cy="17" r="1.1" fill="#666"/></svg>
<div class="a" style="left:535px;top:1077px;width:51px;height:3px;background:#76b9ed"></div>
<div class="a" style="left:597px;top:1077px;width:51px;height:3px;background:#76b9ed"></div>
<div class="a" style="left:659px;top:1077px;width:51px;height:3px;background:#76b9ed"></div>
<div class="a" style="left:716px;top:1077px;width:61px;height:3px;background:#76b9ed"></div>
<!-- tray -->
<svg style="left:0;top:1030px" width="1920" height="50"><g fill="none" stroke="#fff" stroke-width="1.4">
<path d="M1525 29 l8 -8 l8 8"/>
<rect x="1559" y="15" width="7" height="12" rx="3.5" fill="#fff"/><path d="M1556 23 q0 7 6.5 7 q6.5 0 6.5 -7 M1562.5 30 v4 M1559 34 h7"/>
<path d="M1587 35 q0 -12 12 -14 M1590 35 q0 -8 9 -10 M1593 35 q0 -5 6 -6" /><circle cx="1598" cy="34" r="1.2" fill="#fff"/>
<path d="M1613 21 h4 l6 -5 v18 l-6 -5 h-4z M1626 22 q2 3 0 6 M1629 19 q4 6 0 12" />
<path d="M1678 22 l17 -5 l3 12 l-17 5z" fill="#f05a1a" stroke="#f05a1a"/>
</g>
<path d="M1822 15 h14 v16 h-14z M1825 19 h8 M1825 23 h8 M1825 27 h8" fill="none" stroke="#fff" stroke-width="1.5"/>
<rect x="1832" y="25" width="15" height="15" fill="#e81123"/>
<path d="M1869 15 h18 v13 h-10 l-5 4 v-4 h-3z M1872 19 h12 M1872 23 h12" fill="none" stroke="#fff" stroke-width="1.5"/>
<circle cx="1888" cy="34" r="10" fill="#2b2f36" stroke="#777" stroke-width="1.2"/>
<rect x="1913" y="0" width="1" height="50" fill="#3b4a5a"/>
</svg>
<div class="t" style="left:1642px;top:1046px;font-size:19px;color:#fff">中</div>
<div class="t" style="left:1682px;top:1045px;font-size:15px;font-weight:bold;color:#fff;transform:rotate(-16deg)">S</div>
<div class="t" style="left:1836px;top:1057px;font-size:11px;color:#fff">7</div>
<div class="t" style="left:1883px;top:1057px;font-size:14px;font-weight:bold;color:#fff">1</div>
<div class="t" style="left:1720px;top:1036px;font-size:15.5px;color:#fff">16:02 周三</div>
<div class="t" style="left:1720px;top:1056px;font-size:16.8px;color:#fff">2021/12/8</div>

<div class="a" style="left:1570px;top:213px;width:305px;height:45px;background:#3b3e44;border-radius:6px;box-shadow:0 2px 6px rgba(0,0,0,.35)"></div>
<div class="a" style="left:1614px;top:221px;width:1px;height:29px;background:#25272b"></div>
<div class="a" style="left:1835px;top:222px;width:1px;height:27px;background:#55585d"></div>
<div class="t" style="left:1624px;top:227px;font-size:15px;color:#fff">正在讲话:</div>
<svg style="left:1759px;top:220px" width="60" height="32"><defs><linearGradient id="mlg" x1="0" y1="0" x2="1" y2="1"><stop offset="0" stop-color="#6a6d72"/><stop offset="1" stop-color="#4a4d52"/></linearGradient></defs><g fill="url(#mlg)">
<path d="M1 19 l13 -13 q3 -3 6 0 l7 7 l-13 13 q-3 3 -6 0z"/><path d="M17 19 l13 -13 q3 -3 6 0 l13 13 q3 3 0 6 l-4 4 q-3 3 -6 0 l-6 -6 l-4 4 q-3 3 -6 0z" fill="#5f6267"/>
</g></svg>
<svg style="left:1844px;top:225px" width="22" height="20"><path d="M2 9 l8 -7 v4 q9 0 10 10 q-3 -5 -10 -5 v4z" fill="#a5a8ad"/></svg>
<svg style="left:1581px;top:224px" width="22" height="22" viewBox="0 0 22 22"><rect x="7" y="2" width="8" height="12" rx="4" fill="#8c8f94"/><path d="M4.5 10.5 q0 6.5 6.5 6.5 q6.5 0 6.5 -6.5" fill="none" stroke="#8c8f94" stroke-width="1.8"/><rect x="10" y="17" width="2" height="3" fill="#8c8f94"/><rect x="7.5" y="19.5" width="7" height="1.6" fill="#8c8f94"/><line x1="3" y1="19" x2="19" y2="3" stroke="#e0463a" stroke-width="1.8"/></svg>
</body></html>
